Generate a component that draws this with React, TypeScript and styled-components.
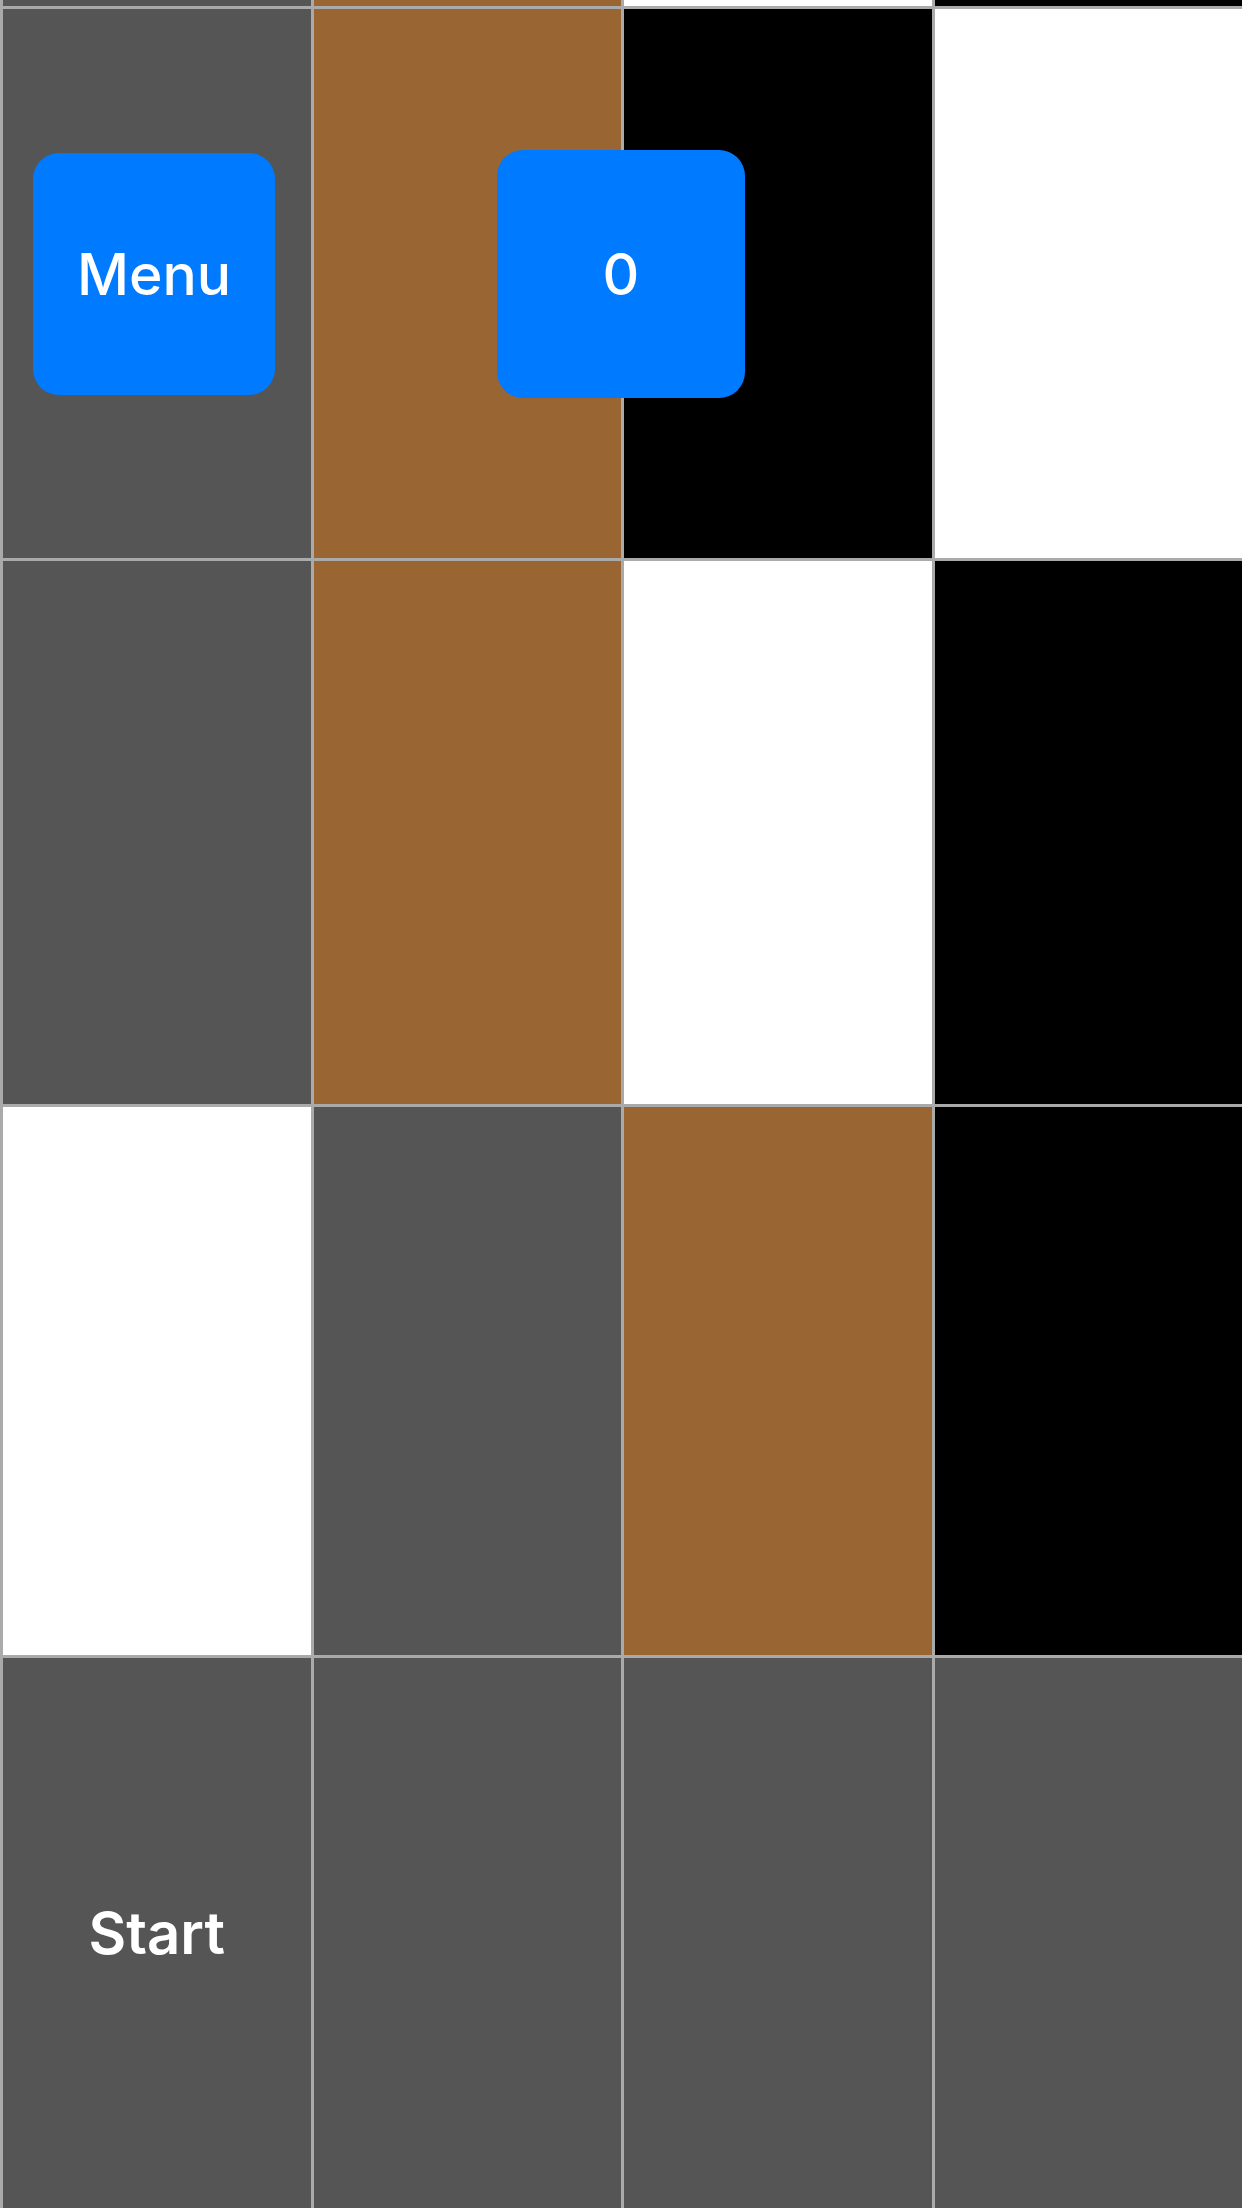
import React from 'react';
import styled, { createGlobalStyle } from 'styled-components';

type Tile = 'dark' | 'brown' | 'black' | 'white';

const GlobalStyle = createGlobalStyle`
  html, body {
    margin: 0;
    padding: 0;
    background: #555555;
    overflow: hidden;
  }
  * {
    box-sizing: border-box;
  }
`;

const tileColors: Record<Tile, string> = {
  dark: '#555555',
  brown: '#996633',
  black: '#000000',
  white: '#ffffff',
};

// rows from the top of the screen; the first one is mostly scrolled away
const rows: { height: number; tiles: Tile[]; label?: string }[] = [
  { height: 6, tiles: ['dark', 'brown', 'white', 'black'] },
  { height: 552, tiles: ['dark', 'brown', 'black', 'white'] },
  { height: 546, tiles: ['dark', 'brown', 'white', 'black'] },
  { height: 551, tiles: ['white', 'dark', 'brown', 'black'] },
  { height: 553, tiles: ['dark', 'dark', 'dark', 'dark'], label: 'Start' },
];

const Screen = styled.div`
  position: relative;
  width: 1242px;
  height: 2208px;
  overflow: hidden;
  font-family: Inter, "Liberation Sans", Arial, sans-serif;
`;

const Board = styled.div`
  display: flex;
  flex-direction: column;
`;

const Row = styled.div<{ $first: boolean }>`
  display: grid;
  grid-template-columns: repeat(4, 1fr);
  flex-shrink: 0;
  border-top: ${(p) => (p.$first ? 'none' : '3px solid #aaaaaa')};
`;

const Cell = styled.div<{ $color: string }>`
  display: flex;
  align-items: center;
  justify-content: center;
  background: ${(p) => p.$color};
  border-left: 3px solid #aaaaaa;
  color: #ffffff;
  font-size: 58px;
  font-weight: 600;
`;

const Hud = styled.div`
  position: absolute;
  top: 150px;
  left: 0;
  right: 0;
  height: 248px;
  display: grid;
  grid-template-columns: 1fr auto 1fr;
  align-items: center;
`;

const HudButton = styled.button<{ $size: number }>`
  width: ${(p) => p.$size}px;
  height: ${(p) => p.$size}px;
  border: none;
  border-radius: 26px;
  background: #007aff;
  color: #ffffff;
  font-family: Inter, "Liberation Sans", Arial, sans-serif;
  font-size: 57px;
  font-weight: 500;
  display: flex;
  align-items: center;
  justify-content: center;
  padding: 0;
`;

const MenuButton = styled(HudButton)`
  justify-self: start;
  margin-left: 33px;
`;

const App: React.FC = () => {
  return (
    <>
      <GlobalStyle />
      <Screen>
        <Board>
          {rows.map((row, i) => (
            <Row key={i} $first={i === 0} style={{ height: row.height }}>
              {row.tiles.map((t, j) => (
                <Cell key={j} $color={tileColors[t]}>
                  {j === 0 && row.label}
                </Cell>
              ))}
            </Row>
          ))}
        </Board>
        <Hud>
          <MenuButton $size={242}>Menu</MenuButton>
          <HudButton $size={248}>0</HudButton>
          <div />
        </Hud>
      </Screen>
    </>
  );
};

export default App;
